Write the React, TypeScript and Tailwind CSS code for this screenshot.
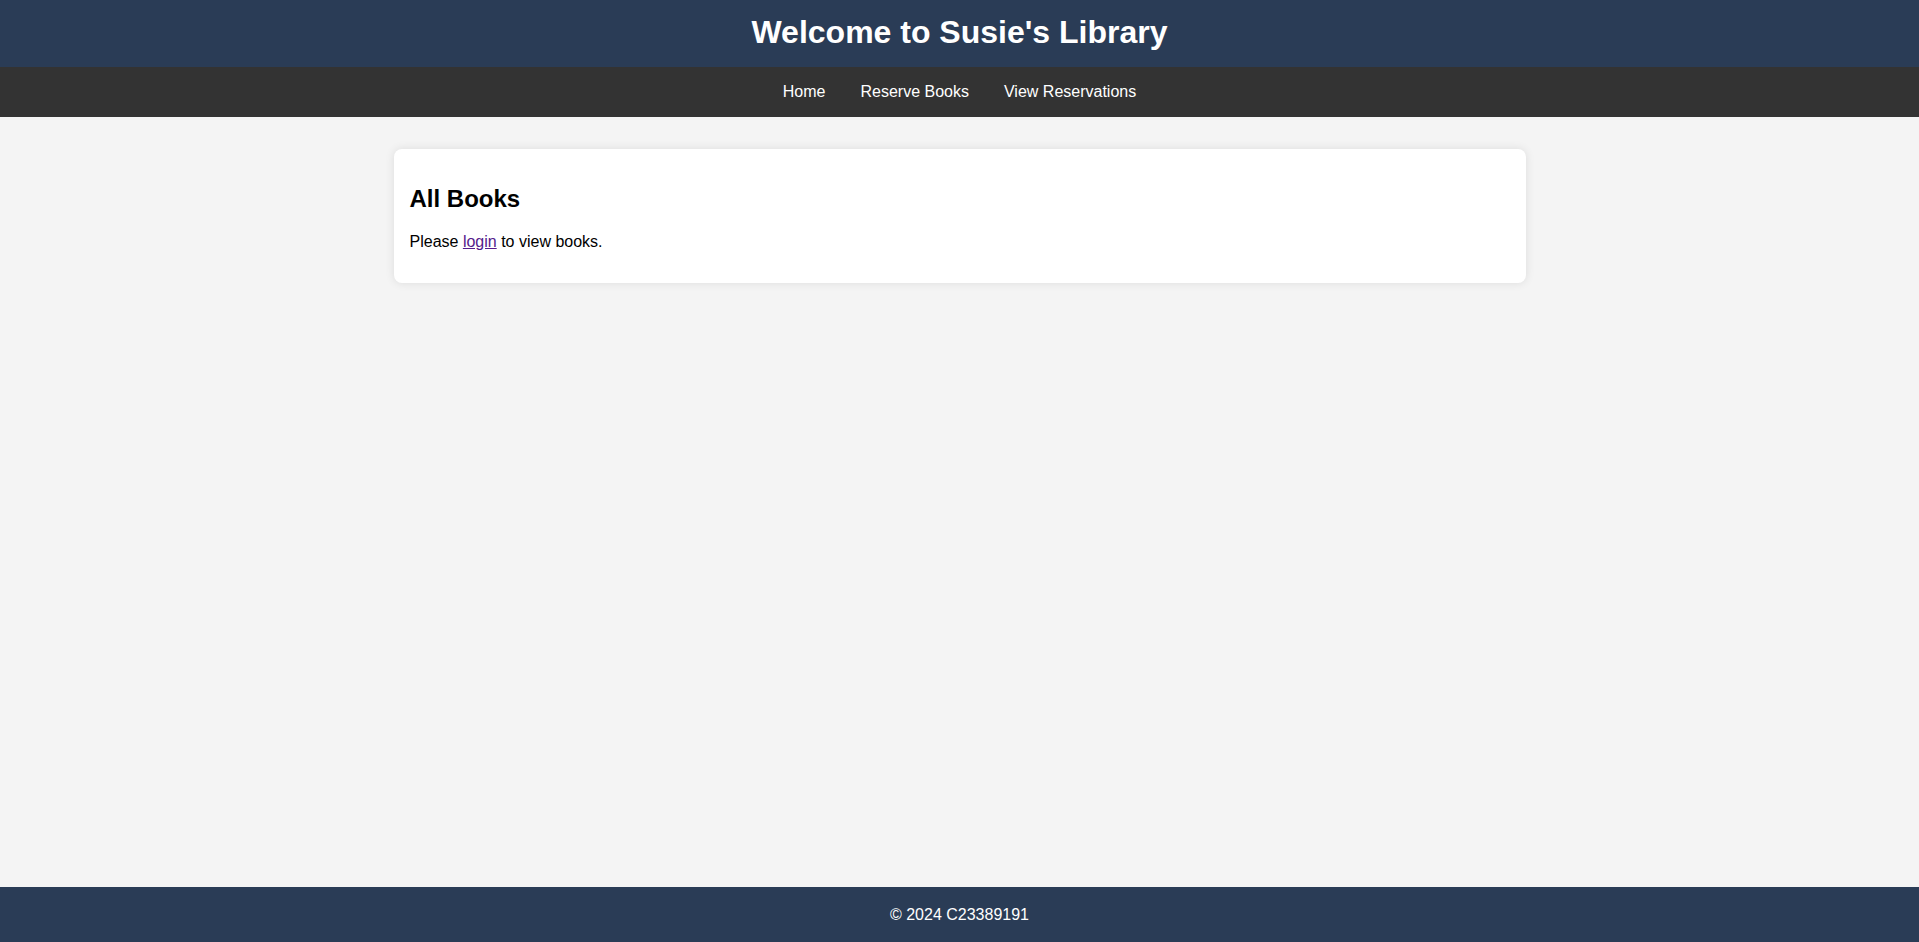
import React from "react";

const navLinks = ["Home", "Reserve Books", "View Reservations"];

export default function App() {
  return (
    <div className="min-h-screen flex flex-col bg-[#f4f4f4] font-['Liberation_Sans',Arial,sans-serif] text-black">
      <header className="h-[67px] bg-[#2a3c56] flex items-center justify-center pb-1">
        <h1 className="text-[32px] font-bold text-white leading-none">
          Welcome to Susie's Library
        </h1>
      </header>
      <nav className="h-[50px] bg-[#333333] flex items-center justify-center gap-[35px]">
        {navLinks.map((label) => (
          <a key={label} href="#" className="text-white text-base">
            {label}
          </a>
        ))}
      </nav>
      <main className="flex-1 pt-[32px]">
        <div className="w-[1132px] mx-auto bg-white rounded-lg shadow-[0_0_10px_rgba(0,0,0,0.1)] p-4">
          <h2 className="text-2xl font-bold mt-[20px] mb-[20px] leading-[1.15]">
            All Books
          </h2>
          <p className="text-base leading-[1.15] mb-4">
            Please{" "}
            <a href="#" className="text-[#551a8b] underline">
              login
            </a>{" "}
            to view books.
          </p>
        </div>
      </main>
      <footer className="h-[55px] bg-[#2a3c56] flex items-center justify-center text-white text-base">
        © 2024 C23389191
      </footer>
    </div>
  );
}
